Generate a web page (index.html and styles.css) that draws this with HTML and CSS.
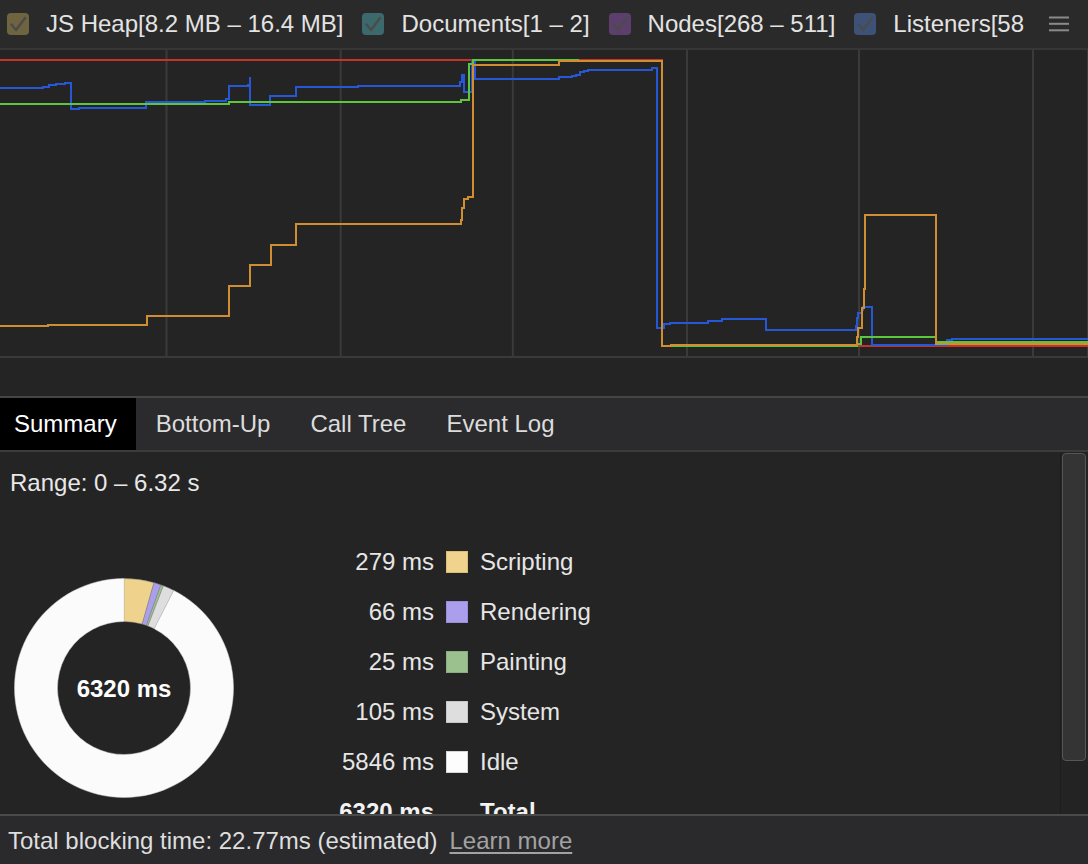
FILE: index.html
```html
<!DOCTYPE html>
<html>
<head>
<meta charset="utf-8">
<link rel="stylesheet" href="styles.css">
</head>
<body>
<div class="app">
  <div class="legendbar">
    <div class="series">
      <span class="item">
        <span class="cb cb-heap"><svg viewBox="0 0 22 22" width="22" height="22"><path class="check" d="M4.5 11.5 L9 17 L18 5"/></svg></span>
        <span class="series-label">JS Heap[8.2 MB – 16.4 MB]</span>
      </span>
      <span class="item">
        <span class="cb cb-docs"><svg viewBox="0 0 22 22" width="22" height="22"><path class="check" d="M4.5 11.5 L9 17 L18 5"/></svg></span>
        <span class="series-label">Documents[1 – 2]</span>
      </span>
      <span class="item">
        <span class="cb cb-nodes"><svg viewBox="0 0 22 22" width="22" height="22"><path class="check" d="M4.5 11.5 L9 17 L18 5"/></svg></span>
        <span class="series-label">Nodes[268 – 511]</span>
      </span>
      <span class="item">
        <span class="cb cb-listeners"><svg viewBox="0 0 22 22" width="22" height="22"><path class="check" d="M4.5 11.5 L9 17 L18 5"/></svg></span>
        <span class="series-label">Listeners[58 – 264]</span>
      </span>
    </div>
    <div class="menu">
      <svg viewBox="0 0 20 16" width="20" height="16"><rect x="0" y="0.5" width="20" height="2" class="menu-line"/><rect x="0" y="6.8" width="20" height="2" class="menu-line"/><rect x="0" y="13.3" width="20" height="2" class="menu-line"/></svg>
    </div>
  </div>

  <svg class="chart" viewBox="0 50 1088 308" width="1088" height="308">
    <rect x="0" y="50" width="1088" height="308" class="chart-bg"/>
    <rect x="165.5" y="50" width="2" height="306" class="grid"/>
    <rect x="339.7" y="50" width="2" height="306" class="grid"/>
    <rect x="511.8" y="50" width="2" height="306" class="grid"/>
    <rect x="686" y="50" width="2" height="306" class="grid"/>
    <rect x="858" y="50" width="2" height="306" class="grid"/>
    <rect x="1032" y="50" width="2" height="306" class="grid"/>
    <rect x="1087" y="50" width="1" height="306" class="grid"/>
    <rect x="0" y="356" width="1088" height="2" class="grid"/>
    <path class="ln ln-red" d="M0 60 H662 V346 H1088"/>
    <path class="ln ln-blue" d="M0 88 H43 V87 H49 V85 H56 V84 H65 V83 H71 V109 H79 V108 H146 V102 H205 V101 H226 V99 H229 V86 H248 V85 H250 V77 V105 H270 V96 H296 V87 H358 V86 H460 V82 H462 V75 H464 V92 H472 V61 H475 V79 H559 V77 H572 V76 H576 V75 H580 V72 H584 V71 H588 V70 H652 V68 H657 V328 H664 V324 H670 V323 H708 V321 H722 V319 H766 V330 H856 V326 H857 V318 H858 V313 H862 V310 H863 V307 H872 V345 H947 V340 H952 V339 H1088"/>
    <path class="ln ln-green" d="M0 104 H229 V102 H461 V100 H469 V64 H473 V60 H578 V61 H662 V346 H857 V344 H861 V337 H936 V342 H1088"/>
    <path class="ln ln-orange" d="M0 326 H48 V325 H147 V316 H229 V286 H250 V265 H271 V245 H296 V224 H461 V220 H462 V208 H464 V199 H468 V197 H473 V65 H559 V61 H662 V346 H671 V345 H857 V337 H858 V328 H862 V308 H864 V289 H865 V215 H936 V344 H1088"/>
  </svg>
  <div class="chart-gap"></div>

  <div class="tabs">
    <div class="tab tab-selected">Summary</div>
    <div class="tab">Bottom-Up</div>
    <div class="tab">Call Tree</div>
    <div class="tab">Event Log</div>
  </div>

  <div class="content">
    <div class="pane">
      <div class="range">Range: 0 – 6.32 s</div>
      <div class="summary">
        <div class="donut">
          <svg viewBox="0 0 220 220" width="220" height="220">
            <path class="seg seg-scripting" d="M110 0.5 A109.5 109.5 0 0 1 139.98 4.68 L128.21 46.04 A66.5 66.5 0 0 0 110 43.5 Z"/>
            <path class="seg seg-rendering" d="M139.98 4.68 A109.5 109.5 0 0 1 146.82 6.88 L132.36 47.37 A66.5 66.5 0 0 0 128.21 46.04 Z"/>
            <path class="seg seg-painting" d="M146.82 6.88 A109.5 109.5 0 0 1 149.38 7.83 L133.92 47.95 A66.5 66.5 0 0 0 132.36 47.37 Z"/>
            <path class="seg seg-system" d="M149.38 7.83 A109.5 109.5 0 0 1 159.81 12.49 L140.25 50.78 A66.5 66.5 0 0 0 133.92 47.95 Z"/>
            <path class="seg seg-idle" d="M159.81 12.49 A109.5 109.5 0 1 1 110 0.5 L110 43.5 A66.5 66.5 0 1 0 140.25 50.78 Z"/>
            <text x="110" y="110" class="donut-label">6320 ms</text>
          </svg>
        </div>
        <div class="legend">
          <div class="val">279 ms</div><div class="sw sw-scripting"></div><div class="name">Scripting</div>
          <div class="val">66 ms</div><div class="sw sw-rendering"></div><div class="name">Rendering</div>
          <div class="val">25 ms</div><div class="sw sw-painting"></div><div class="name">Painting</div>
          <div class="val">105 ms</div><div class="sw sw-system"></div><div class="name">System</div>
          <div class="val">5846 ms</div><div class="sw sw-idle"></div><div class="name">Idle</div>
          <div class="val total">6320 ms</div><div class="sw-empty"></div><div class="name total">Total</div>
        </div>
      </div>
    </div>
    <div class="scrollbar"><div class="thumb"></div></div>
  </div>

  <div class="footer">
    <span class="tbt">Total blocking time: 22.77ms (estimated)</span>
    <a class="learn">Learn more</a>
  </div>
</div>
</body>
</html>
```

FILE: styles.css
```css
* { box-sizing: border-box; }

html, body {
  margin: 0;
  padding: 0;
  background: #242424;
}

body {
  font-family: "Liberation Sans", Arial, Helvetica, sans-serif;
  font-size: 24px;
  color: #e3e3e3;
}

.app {
  width: 1088px;
  height: 864px;
  overflow: hidden;
  display: flex;
  flex-direction: column;
}

/* ---------- top legend ---------- */
.legendbar {
  height: 50px;
  flex: none;
  display: flex;
  align-items: center;
  background: #2a2a2a;
  border-bottom: 2px solid #363636;
}

.series {
  flex: 1;
  min-width: 0;
  display: flex;
  align-items: center;
  white-space: nowrap;
  overflow: hidden;
  padding-left: 7px;
}

.item {
  display: flex;
  align-items: center;
  flex: none;
  margin-right: 19px;
}

.cb {
  width: 22px;
  height: 22px;
  border-radius: 4px;
  display: block;
  flex: none;
}
.cb svg { display: block; }
.check {
  fill: none;
  stroke: #4b4b4b;
  stroke-width: 2.4;
  stroke-linecap: round;
  stroke-linejoin: round;
}

.cb-heap { background: #6f6440; }
.cb-docs { background: #3c6a6c; }
.cb-nodes { background: #5c3f6d; }
.cb-listeners { background: #3d5276; }

.series-label {
  margin-left: 17px;
  color: #e3e3e3;
  line-height: 28px;
}

.menu {
  width: 60px;
  flex: none;
  display: flex;
  align-items: center;
  justify-content: center;
  padding-left: 2px;
}
.menu svg { display: block; }
.menu-line { fill: #8a8a8a; }

/* ---------- chart ---------- */
.chart {
  display: block;
  flex: none;
}
.chart-bg { fill: #242424; }
.grid { fill: #3a3a3a; }
.ln {
  fill: none;
  stroke-width: 2;
  stroke-linejoin: miter;
  stroke-linecap: square;
}
.ln-red { stroke: #c9322b; }
.ln-blue { stroke: #2557d6; }
.ln-green { stroke: #5cc73d; }
.ln-orange { stroke: #d18e31; }

.chart-gap {
  height: 38px;
  flex: none;
  background: #242424;
}

/* ---------- tabs ---------- */
.tabs {
  height: 56px;
  flex: none;
  display: flex;
  background: #2b2b2d;
  border-top: 2px solid #454545;
  border-bottom: 2px solid #3c3c3c;
}

.tab {
  padding: 0 20px;
  display: flex;
  align-items: center;
  color: #dcdcdc;
  white-space: nowrap;
}

.tab-selected {
  background: #000;
  color: #fff;
  padding: 0 19px 0 14px;
}

/* ---------- content ---------- */
.content {
  height: 362px;
  flex: none;
  display: flex;
  overflow: hidden;
  background: #242424;
}

.pane {
  flex: 1;
  min-width: 0;
  overflow: hidden;
  padding-top: 17px;
}

.range {
  padding-left: 10px;
  line-height: 28px;
  color: #e8e8e8;
}

.summary {
  display: flex;
  align-items: flex-start;
  margin-top: 40px;
}

.donut {
  margin-left: 14px;
  margin-top: 41px;
  width: 220px;
  height: 220px;
  flex: none;
}
.donut svg { display: block; }

.seg {
  stroke: #8a8a8a;
  stroke-width: 0.5;
}
.seg-scripting { fill: #efd28b; }
.seg-rendering { fill: #ab9eec; }
.seg-painting { fill: #9bc28e; }
.seg-system { fill: #dedede; }
.seg-idle { fill: #fbfbfb; stroke: #d0d0d0; }

.donut-label {
  font-family: "Liberation Sans", Arial, Helvetica, sans-serif;
  font-size: 24px;
  font-weight: bold;
  fill: #ffffff;
  text-anchor: middle;
  dominant-baseline: central;
}

.legend {
  margin-left: 82px;
  display: grid;
  grid-template-columns: 118px 22px auto;
  grid-auto-rows: 50px;
  column-gap: 12px;
  align-items: center;
}

.val {
  text-align: right;
  color: #e6e6e6;
  white-space: nowrap;
}

.name {
  color: #e6e6e6;
  white-space: nowrap;
}

.total {
  font-weight: bold;
  color: #f2f2f2;
}

.sw {
  width: 22px;
  height: 22px;
  border: 1px solid rgba(0, 0, 0, 0.12);
}
.sw-empty { width: 22px; height: 22px; }
.sw-scripting { background: #f0d38d; border-color: #d9bd7a; }
.sw-rendering { background: #ab9eec; border-color: #9a8ed8; }
.sw-painting { background: #9bc28e; border-color: #8aae7e; }
.sw-system { background: #dedede; border-color: #c8c8c8; }
.sw-idle { background: #fdfdfd; border-color: #d6d6d6; }

/* ---------- scrollbar ---------- */
.scrollbar {
  width: 28px;
  flex: none;
  background: #232323;
  border-left: 1px solid #1d1d1d;
  padding: 1px 2px 0 1px;
}

.thumb {
  height: 308px;
  background: #343434;
  border: 1px solid #565656;
  border-radius: 4px;
}

/* ---------- footer ---------- */
.footer {
  height: 50px;
  flex: none;
  display: flex;
  align-items: center;
  background: #2a2a2d;
  border-top: 2px solid #4a4a4a;
  padding-left: 8px;
  padding-top: 1px;
  white-space: nowrap;
}

.tbt { color: #dedede; }

.learn {
  margin-left: 12px;
  color: #a2a2a2;
  text-decoration: underline;
  text-underline-offset: 3px;
}
```
